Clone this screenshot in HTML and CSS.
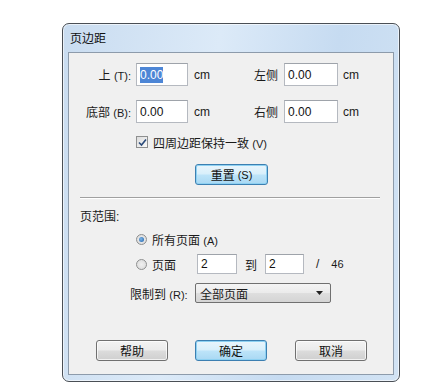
FILE: index.html
```html
<!DOCTYPE html>
<html lang="zh-CN">
<head>
<meta charset="utf-8">
<title>页边距</title>
<link rel="stylesheet" href="styles.css">
</head>
<body>
<div class="window">
  <div class="titlebar">页边距</div>
  <div class="panel">
    <div class="row r1">
      <span class="lbl">上 <small>(T):</small></span>
      <div class="field w52"><span class="sel">0.00</span></div>
      <span class="unit">cm</span>
      <span class="lbl2">左侧</span>
      <div class="field w54">0.00</div>
      <span class="unit u2">cm</span>
    </div>
    <div class="row r2">
      <span class="lbl">底部 <small>(B):</small></span>
      <div class="field w52">0.00</div>
      <span class="unit">cm</span>
      <span class="lbl2">右侧</span>
      <div class="field w54">0.00</div>
      <span class="unit u2">cm</span>
    </div>
    <div class="row chk-row">
      <span class="checkbox"><svg width="9" height="9" viewBox="0 0 9 9"><path d="M1 4.5 L3.5 7 L8 1.5" fill="none" stroke="#2a4a7a" stroke-width="1.6"/></svg></span>
      <span class="chk-text">四周边距保持一致 <small>(V)</small></span>
    </div>
    <div class="row reset-row">
      <div class="btn btn-default w73">重置 <small>(S)</small></div>
    </div>
    <div class="sep"></div>
    <div class="section-title">页范围:</div>
    <div class="row radio-row1">
      <span class="radio on"><span class="dot"></span></span>
      <span class="radio-text">所有页面 <small>(A)</small></span>
    </div>
    <div class="row radio-row2">
      <span class="radio"></span>
      <span class="radio-text pages">页面</span>
      <div class="field w40 h20">2</div>
      <span class="to">到</span>
      <div class="field w39 h20">2</div>
      <span class="slash">/</span>
      <span class="total">46</span>
    </div>
    <div class="row limit-row">
      <span class="limit-lbl">限制到 <small>(R):</small></span>
      <div class="select">
        <span>全部页面</span>
        <svg class="arrow" width="7" height="4" viewBox="0 0 7 4"><path d="M0 0 H7 L3.5 4 Z" fill="#222"/></svg>
      </div>
    </div>
    <div class="row btn-row">
      <div class="btn w72">帮助</div>
      <div class="btn btn-default w72">确定</div>
      <div class="btn w72">取消</div>
    </div>
  </div>
</div>
</body>
</html>
```
FILE: styles.css
```css
* { box-sizing: border-box; }
html, body { margin: 0; padding: 0; background: #ffffff; }
body {
  font-family: "Liberation Sans", "Noto Sans CJK SC", sans-serif;
  font-size: 12px;
  color: #1a1a1a;
  width: 431px;
  height: 388px;
  overflow: hidden;
}
small { font-size: 11px; }
.window {
  margin: 23px 0 0 62px;
  width: 338px;
  height: 359px;
  border: 1px solid #4a4f55;
  border-radius: 7px;
  background: linear-gradient(100deg, #c9dcf0 0%, #dceaf8 40%, #c6dbf1 70%, #d2e3f4 100%);
  padding: 0 5px 6px 5px;
  box-shadow: inset 0 0 0 1px rgba(255,255,255,0.6);
}
.titlebar {
  height: 28px;
  line-height: 28px;
  padding-left: 2px;
  font-size: 12px;
  color: #111;
  font-family: "Noto Sans CJK SC", sans-serif;
}
.panel {
  width: 326px;
  height: 323px;
  border: 1px solid #8d9bab;
  background: #f0f0f0;
  padding: 0;
}
.row { display: flex; align-items: center; }
.r1 { margin-top: 10px; height: 23px; }
.r2 { margin-top: 14px; height: 23px; }
.lbl { width: 62px; text-align: right; white-space: nowrap; }
.lbl2 { width: 54px; text-align: right; }
.field {
  height: 23px;
  background: #fff;
  border: 1px solid #b5b9c0;
  border-top-color: #9ea3aa;
  padding-left: 3px;
  display: flex;
  align-items: center;
  font-size: 12px;
  color: #111;
}
.r1 .field, .r2 .field { margin-left: 5px; }
.lbl2 + .field { margin-left: 6px; }
.w52 { width: 52px; }
.w54 { width: 54px; }
.w40 { width: 40px; }
.w39 { width: 39px; }
.h20 { height: 20px; }
.sel { background: #4d86d6; color: #fff; padding: 1px 0; }
.unit { margin-left: 6px; width: 30px; }
.u2 { margin-left: 5px; }
.chk-row { margin-top: 11px; height: 16px; padding-left: 67px; }
.checkbox {
  width: 12px; height: 12px;
  border: 1px solid #8e8f8f;
  background: linear-gradient(135deg, #dcdcdc, #fafafa);
  display: flex; align-items: center; justify-content: center;
}
.chk-text { margin-left: 5px; }
.reset-row { margin-top: 14px; padding-left: 126px; }
.btn {
  height: 21px;
  border: 1px solid #707070;
  border-radius: 3px;
  background: linear-gradient(#f3f3f3 0%, #ebebeb 48%, #dcdcdc 52%, #cfcfcf 100%);
  box-shadow: inset 0 0 0 1px rgba(255,255,255,0.7);
  display: flex; align-items: center; justify-content: center;
  font-family: "Noto Sans CJK SC", sans-serif;
  font-size: 12px;
  color: #111;
}
.btn small { font-family: "Liberation Sans", sans-serif; margin-left: 3px; }
.btn-default {
  border-color: #3c7fb1;
  background: linear-gradient(#e9f5fc 0%, #d8effb 48%, #bde4f9 52%, #a9d8f3 100%);
  box-shadow: inset 0 0 0 1px #8ed1f2;
}
.w73 { width: 73px; }
.w72 { width: 72px; }
.sep {
  margin: 12px 0 0 11px;
  width: 300px;
  height: 2px;
  border-top: 1px solid #a0a0a0;
  border-bottom: 1px solid #ffffff;
}
.section-title { margin: 10px 0 0 11px; height: 16px; line-height: 16px; }
.radio-row1 { margin-top: 6px; height: 16px; padding-left: 67px; }
.radio {
  width: 11px; height: 11px;
  border-radius: 50%;
  border: 1px solid #8e8f8f;
  background: radial-gradient(circle, #f0f0f0, #d8d8d8);
  display: flex; align-items: center; justify-content: center;
}
.radio .dot {
  width: 5px; height: 5px; border-radius: 50%;
  background: radial-gradient(circle at 40% 40%, #7fb7e8, #1b5ea8);
}
.radio-text { margin-left: 5px; }
.radio-row2 { margin-top: 7px; height: 20px; padding-left: 67px; }
.pages { width: 45px; }
.to { margin-left: 8px; width: 20px; }
.slash { margin-left: 12px; }
.total { margin-left: 12px; font-size: 11px; }
.limit-row { margin-top: 9px; height: 20px; padding-left: 61px; }
.limit-lbl { width: 65px; white-space: nowrap; }
.select {
  width: 136px; height: 20px;
  border: 1px solid #707070;
  border-radius: 2px;
  background: linear-gradient(#f4f4f4 0%, #ebebeb 48%, #dedede 52%, #d4d4d4 100%);
  display: flex; align-items: center; justify-content: space-between;
  padding: 0 7px 0 4px;
  font-family: "Noto Sans CJK SC", sans-serif;
}
.btn-row { margin-top: 37px; padding-left: 27px; gap: 27px; }
.btn-row .btn:nth-child(2) { margin-left: 0; }
.btn-row .btn:nth-child(3) { margin-left: 1px; }
```
